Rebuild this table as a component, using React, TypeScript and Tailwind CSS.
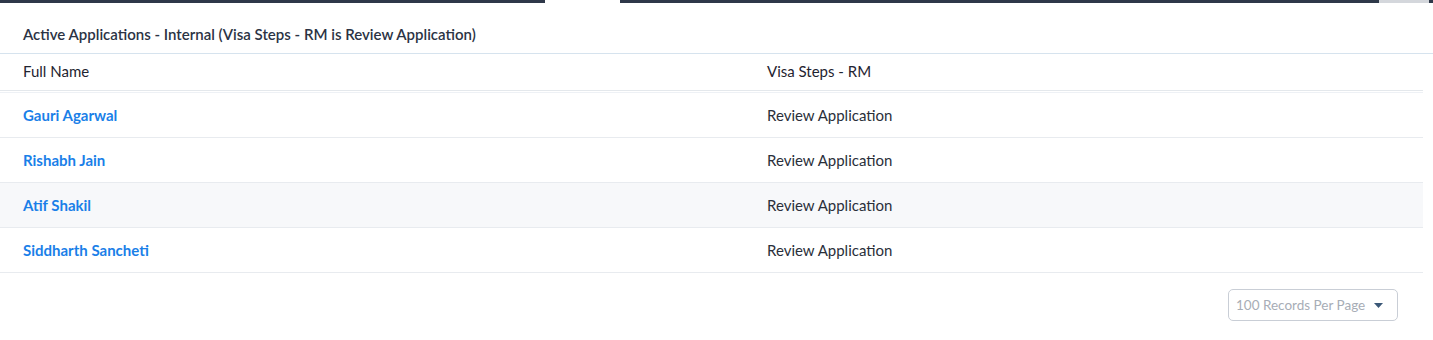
const rows = [
  { name: "Gauri Agarwal", step: "Review Application" },
  { name: "Rishabh Jain", step: "Review Application" },
  { name: "Atif Shakil", step: "Review Application", shaded: true },
  { name: "Siddharth Sancheti", step: "Review Application" },
];

const App = () => {
  return (
    <div
      className="h-[340px] w-full overflow-hidden bg-white text-[#2f3542]"
      style={{ fontFamily: "Lato, 'Noto Sans', sans-serif" }}
    >
      <div className="flex h-[3px]">
        <div className="w-[545px] bg-[#2e3849]" />
        <div className="w-[75px] bg-white" />
        <div className="flex-1 bg-[#2e3849]" />
        <div className="w-[50px] bg-[#d4d7dc]" />
        <div className="w-[4px] bg-[#2e3849]" />
      </div>

      <div className="h-[51px] border-b border-[#d6e3ee] pl-[23px] pt-[23px] text-[15px] font-semibold leading-[17px] text-[#2b3344]">
        Active Applications - Internal (Visa Steps - RM is Review Application)
      </div>

      <div className="mr-[10px]">
        <div className="flex h-[37px] items-center border-b border-[#e4e8ec] pb-[2px] text-[15px] text-[#1f2430]">
          <div className="w-[767px] pl-[23px]">Full Name</div>
          <div>Visa Steps - RM</div>
        </div>
        <div className="mt-px h-px bg-[#eef1f5]" />

        {rows.map((row) => (
          <div
            key={row.name}
            className={`flex h-[45px] items-center border-b border-[#e8ebef] text-[15px] ${
              row.shaded ? "bg-[#f7f8fa]" : "bg-white"
            }`}
          >
            <div className="w-[767px] pl-[23px] font-bold text-[#1a7fe8]">
              {row.name}
            </div>
            <div className="text-[#2a2f3a]">{row.step}</div>
          </div>
        ))}
      </div>

      <div className="mr-[35px] mt-[16px] flex justify-end">
        <button className="flex h-[32px] w-[170px] items-center justify-between rounded-[5px] border border-[#c9ced6] pl-[7px] pr-[14px] text-[13.5px] text-[#a7adb6]">
          <span>100 Records Per Page</span>
          <svg width="9" height="5" viewBox="0 0 9 5">
            <path d="M0 0h9L4.5 5z" fill="#3b5877" />
          </svg>
        </button>
      </div>
    </div>
  );
};

export default App;
